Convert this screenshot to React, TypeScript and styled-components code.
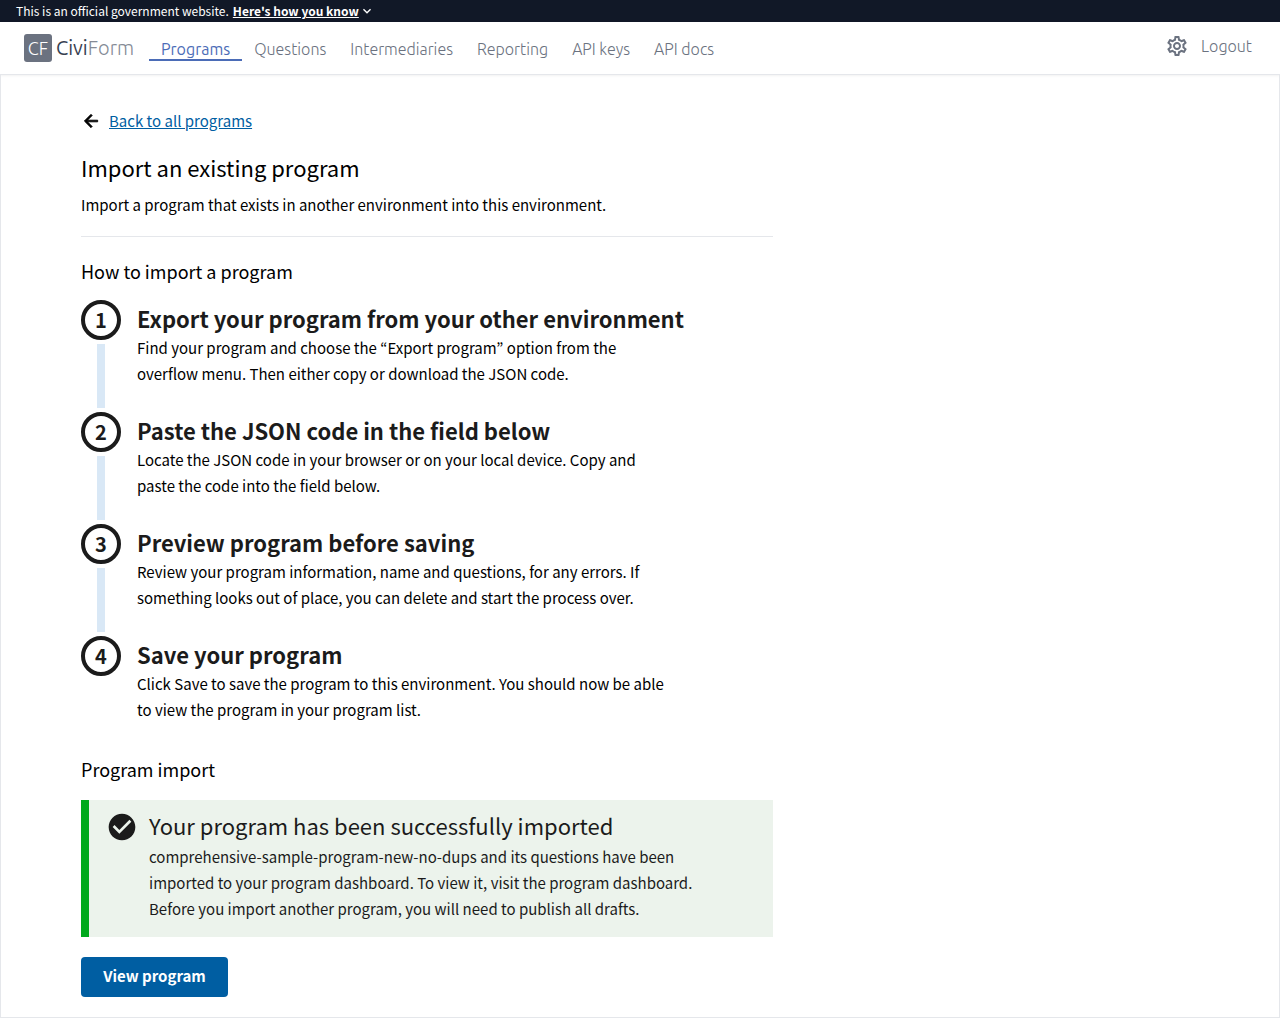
import React from "react";
import styled, { createGlobalStyle } from "styled-components";
import { MdArrowBack, MdCheckCircle, MdExpandMore, MdOutlineSettings } from "react-icons/md";

const GlobalStyle = createGlobalStyle`
  *, *::before, *::after { box-sizing: border-box; }
  body {
    margin: 0;
    background: #fff;
    color: #000;
    font-family: "Source Sans Pro", "Noto Sans CJK KR", sans-serif;
    font-size: 15px;
    line-height: 26px;
  }
  h1, h2, h3, p, ol { margin: 0; padding: 0; font-weight: 400; }
  svg { display: block; flex: none; }
`;

const Page = styled.div`
  min-height: 100vh;
  display: flex;
  flex-direction: column;
`;

const Banner = styled.div`
  display: flex;
  align-items: center;
  height: 22px;
  padding: 0 16px;
  background: #111827;
  color: #fff;
  font-size: 12px;
  line-height: 20px;
`;

const BannerButton = styled.button`
  display: flex;
  align-items: center;
  margin-left: 4px;
  padding: 0;
  border: 0;
  background: none;
  color: inherit;
  font: inherit;
  font-weight: 700;
  cursor: pointer;
  span { text-decoration: underline; }
`;

const Header = styled.header`
  display: flex;
  align-items: center;
  height: 52px;
  padding: 0 28px 0 24px;
  background: #fff;
  box-shadow: 0 1px 3px rgba(0, 0, 0, 0.1);
  color: #6b7280;
  font-family: Ubuntu, "Open Sans", sans-serif;
  font-weight: 300;
  font-size: 16px;
`;

const Brand = styled.a`
  display: flex;
  align-items: center;
  gap: 4px;
  width: 125px;
  color: #858b96;
  font-size: 20px;
  text-decoration: none;
  b { font-weight: 400; color: #374151; }
`;

const BrandMark = styled.span`
  display: grid;
  place-items: center;
  width: 28px;
  height: 28px;
  border-radius: 3px;
  background: #6b7280;
  color: #fff;
  font-size: 18px;
`;

const Nav = styled.nav`
  display: flex;
  flex: 1;
`;

const NavLink = styled.a<{ $active?: boolean }>`
  padding: 4px 12px 0;
  border-bottom: 2px solid ${(p) => (p.$active ? "#4b6cb7" : "transparent")};
  color: ${(p) => (p.$active ? "#4b6cb7" : "inherit")};
  font-weight: ${(p) => (p.$active ? 400 : 300)};
  line-height: 20px;
  text-decoration: none;
`;

const HeaderActions = styled.div`
  display: flex;
  align-items: center;
  gap: 12px;
  padding-bottom: 4px;
  a { color: inherit; text-decoration: none; }
`;

const Main = styled.main`
  flex: 1;
  padding: 33px 80px 20px;
  border: 1px solid #e5e7eb;
`;

const Column = styled.div`
  max-width: 692px;
`;

const BackLink = styled.a`
  display: flex;
  width: fit-content;
  align-items: center;
  gap: 8px;
  color: #000;
  text-decoration: none;
  span { color: #005ea2; text-decoration: underline; }
  path:not([fill="none"]) { stroke: currentColor; stroke-width: 1; }
`;

const Title = styled.h1`
  margin-top: 17px;
  font-size: 22px;
  line-height: 32px;
`;

const Intro = styled.p`
  margin-top: 9px;
  padding-bottom: 18px;
  border-bottom: 1px solid #e5e7eb;
`;

const SectionTitle = styled.h2`
  margin-top: 20px;
  font-size: 18px;
  line-height: 28px;
`;

const Steps = styled.ol`
  margin-top: 15px;
  padding-bottom: 8px;
  list-style: none;
`;

const Step = styled.li`
  display: grid;
  grid-template-columns: 40px minmax(0, 1fr);
  column-gap: 16px;
  padding-bottom: 4px;
`;

const StepRail = styled.div`
  display: flex;
  flex-direction: column;
  align-items: center;
  gap: 4px;
`;

const StepNumber = styled.span`
  display: grid;
  place-items: center;
  width: 40px;
  height: 40px;
  border: 4px solid #1b1b1b;
  border-radius: 50%;
  color: #1b1b1b;
  font-size: 20px;
  font-weight: 700;
  line-height: 32px;
`;

const StepLine = styled.span`
  flex: 1;
  width: 8px;
  background: #d9e8f6;
`;

const StepBody = styled.div<{ $last: boolean }>`
  padding-top: 1px;
  padding-bottom: ${(p) => (p.$last ? 0 : 21)}px;
`;

const StepTitle = styled.h3`
  color: #1b1b1b;
  font-size: 22px;
  font-weight: 700;
  line-height: 34px;
`;

const StepText = styled.p`
  max-width: 536px;
`;

const Alert = styled.div`
  display: flex;
  gap: 11px;
  margin-top: 17px;
  padding: 11px 60px 15px 17px;
  border-left: 8px solid #00a91c;
  background: #ecf3ec;
  color: #1b1b1b;
`;

const AlertTitle = styled.h3`
  margin-bottom: 5px;
  font-size: 22px;
  line-height: 28px;
`;

const PrimaryButton = styled.button`
  margin-top: 20px;
  min-width: 147px;
  height: 40px;
  padding: 0 20px 2px;
  border: 0;
  border-radius: 4px;
  background: #005ea2;
  color: #fff;
  font: inherit;
  font-weight: 700;
  cursor: pointer;
`;

const navItems = ["Programs", "Questions", "Intermediaries", "Reporting", "API keys", "API docs"];

const steps = [
  {
    title: "Export your program from your other environment",
    text: "Find your program and choose the “Export program” option from the overflow menu. Then either copy or download the JSON code.",
  },
  {
    title: "Paste the JSON code in the field below",
    text: "Locate the JSON code in your browser or on your local device. Copy and paste the code into the field below.",
  },
  {
    title: "Preview program before saving",
    text: "Review your program information, name and questions, for any errors. If something looks out of place, you can delete and start the process over.",
  },
  {
    title: "Save your program",
    text: "Click Save to save the program to this environment. You should now be able to view the program in your program list.",
  },
];

export default function App() {
  return (
    <Page>
      <GlobalStyle />
      <Banner>
        This is an official government website.
        <BannerButton type="button">
          <span>Here's how you know</span>
          <MdExpandMore size={16} />
        </BannerButton>
      </Banner>
      <Header>
        <Brand href="#">
          <BrandMark>CF</BrandMark>
          <span>
            <b>Civi</b>Form
          </span>
        </Brand>
        <Nav>
          {navItems.map((item, i) => (
            <NavLink key={item} href="#" $active={i === 0}>
              {item}
            </NavLink>
          ))}
        </Nav>
        <HeaderActions>
          <a href="#" aria-label="Settings">
            <MdOutlineSettings size={24} />
          </a>
          <a href="#">Logout</a>
        </HeaderActions>
      </Header>
      <Main>
        <Column>
          <BackLink href="#">
            <MdArrowBack size={20} />
            <span>Back to all programs</span>
          </BackLink>
          <Title>Import an existing program</Title>
          <Intro>Import a program that exists in another environment into this environment.</Intro>
          <SectionTitle>How to import a program</SectionTitle>
          <Steps>
            {steps.map((step, i) => (
              <Step key={step.title}>
                <StepRail>
                  <StepNumber>{i + 1}</StepNumber>
                  {i < steps.length - 1 && <StepLine />}
                </StepRail>
                <StepBody $last={i === steps.length - 1}>
                  <StepTitle>{step.title}</StepTitle>
                  <StepText>{step.text}</StepText>
                </StepBody>
              </Step>
            ))}
          </Steps>
          <SectionTitle>Program import</SectionTitle>
          <Alert role="status">
            <MdCheckCircle size={32} />
            <div>
              <AlertTitle>Your program has been successfully imported</AlertTitle>
              <p>
                comprehensive-sample-program-new-no-dups and its questions have been imported to your
                program dashboard. To view it, visit the program dashboard. Before you import another
                program, you will need to publish all drafts.
              </p>
            </div>
          </Alert>
          <PrimaryButton type="button">View program</PrimaryButton>
        </Column>
      </Main>
    </Page>
  );
}
